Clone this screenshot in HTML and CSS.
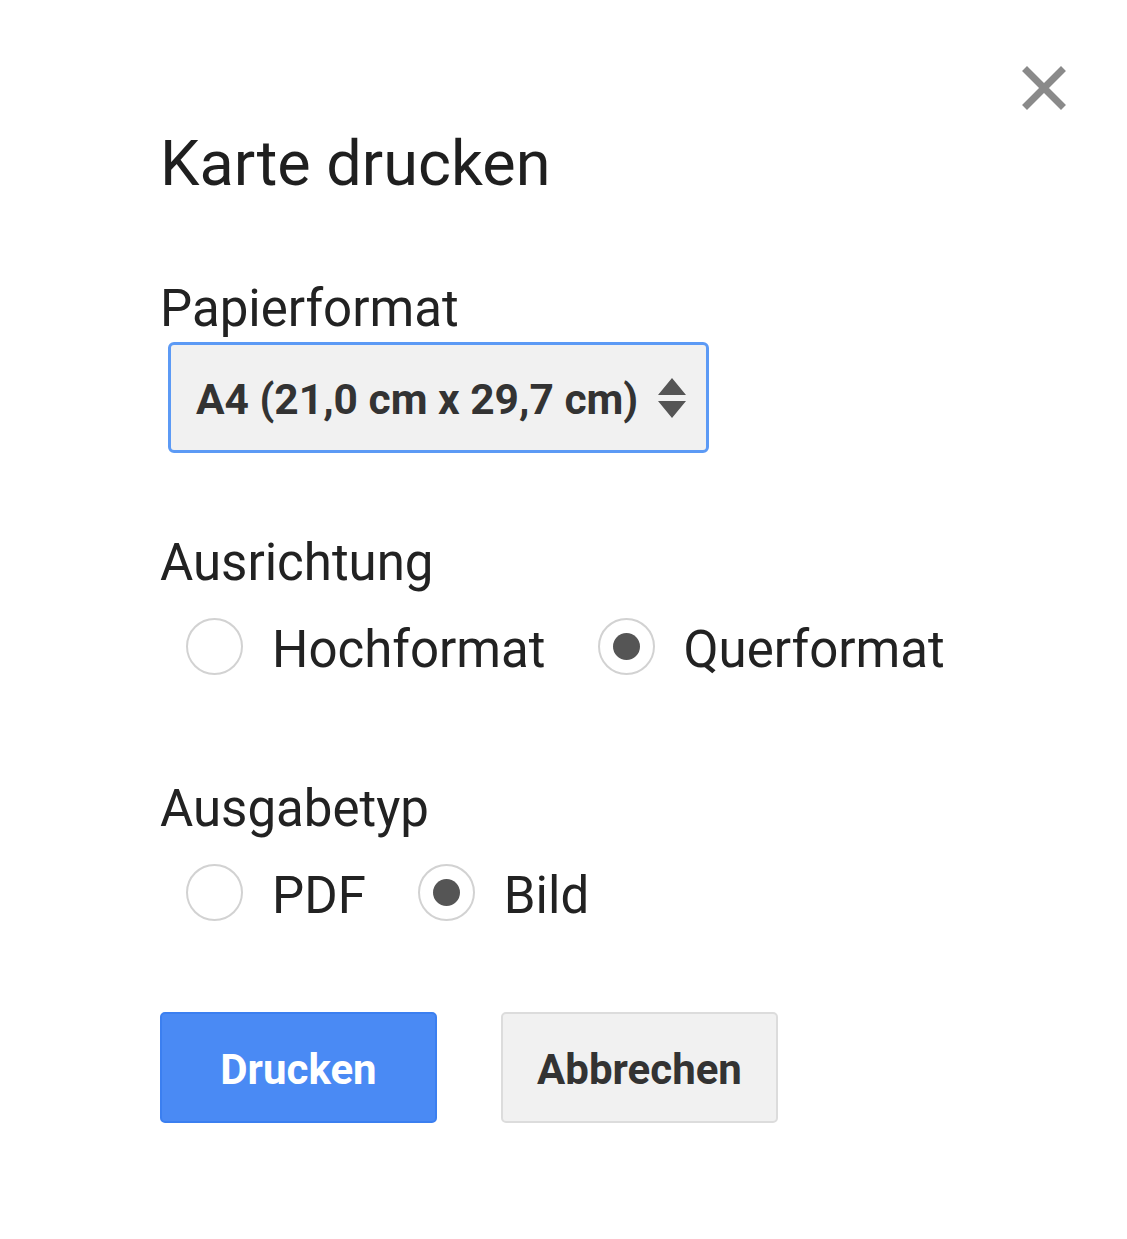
FILE: index.html
```html
<!DOCTYPE html>
<html lang="de">
<head>
    <meta charset="UTF-8">
    <title>Karte drucken</title>
    <link rel="stylesheet" href="styles.css">
</head>
<body>
    <div class="dialog">
        <button class="close" aria-label="Schließen">
            <svg width="44" height="44" viewBox="0 0 44 44">
                <path d="M5 5 L39 39 M39 5 L5 39" stroke="#8a8a8a" stroke-width="7" stroke-linecap="square"/>
            </svg>
        </button>

        <h1 class="title">Karte drucken</h1>

        <div class="label label-first">Papierformat</div>
        <div class="select">
            <span>A4 (21,0 cm x 29,7 cm)</span>
            <svg class="arrows" width="30" height="44" viewBox="0 0 30 44">
                <path d="M15 2 L29 19 L1 19 Z M15 42 L29 25 L1 25 Z" fill="#555"/>
            </svg>
        </div>

        <div class="label">Ausrichtung</div>
        <div class="radios">
            <div class="radio"><span class="dot"></span>Hochformat</div>
            <div class="radio checked"><span class="dot"></span>Querformat</div>
        </div>

        <div class="label label-gap">Ausgabetyp</div>
        <div class="radios">
            <div class="radio"><span class="dot"></span>PDF</div>
            <div class="radio checked"><span class="dot"></span>Bild</div>
        </div>

        <div class="buttons">
            <button class="btn primary">Drucken</button>
            <button class="btn">Abbrechen</button>
        </div>
    </div>
</body>
</html>
```

FILE: styles.css
```css
body {
    margin: 0;
    background: #fff;
    font-family: Roboto, "Liberation Sans", Arial, sans-serif;
    color: #222;
}
.dialog {
    position: relative;
    padding: 124px 0 0 160px;
    width: 967px;
    height: 1115px;
}
.close {
    position: absolute;
    left: 1022px;
    top: 66px;
    width: 44px;
    height: 44px;
    padding: 0;
    border: none;
    background: none;
}
.close svg { display: block; }
.title {
    margin: 0;
    font-size: 63px;
    font-weight: 400;
    line-height: 80px;
    color: #1f1f1f;
}
.label {
    font-size: 51px;
    line-height: 66px;
    margin-top: 77px;
    color: #222;
}
.label-first { margin-top: 72px; }
.label-gap { margin-top: 94px; }
.select {
    box-sizing: border-box;
    display: flex;
    align-items: center;
    justify-content: space-between;
    width: 541px;
    height: 111px;
    margin: 0 0 0 8px;
    padding: 4px 19px 0 25px;
    border: 3px solid #5c9af5;
    border-radius: 6px;
    background: #f1f1f1;
    font-size: 42.5px;
    font-weight: 700;
    white-space: nowrap;
    color: #333;
}
.arrows { display: block; margin-top: -4px; }
.radios {
    display: flex;
    gap: 52px;
    margin: 18px 0 0 26px;
}
.radio {
    display: flex;
    align-items: center;
    gap: 29px;
    height: 66px;
    font-size: 51px;
    color: #222;
    padding-top: 2px;
}
.dot {
    box-sizing: border-box;
    position: relative;
    width: 57px;
    height: 57px;
    margin-top: -6px;
    border: 2px solid #d2d2d2;
    border-radius: 50%;
    background: #fff;
}
.checked .dot::after {
    content: "";
    position: absolute;
    left: 13px;
    top: 13px;
    width: 27px;
    height: 27px;
    border-radius: 50%;
    background: #555;
}
.buttons {
    display: flex;
    gap: 64px;
    margin-top: 84px;
}
.btn {
    box-sizing: border-box;
    width: 277px;
    height: 111px;
    padding: 4px 0 0;
    border: 2px solid #dcdcdc;
    border-radius: 5px;
    background: #f1f1f1;
    font-family: Roboto, "Liberation Sans", Arial, sans-serif;
    font-size: 42px;
    font-weight: 700;
    color: #333;
}
.primary {
    border-color: #3b7ff0;
    background: #4a8af4;
    color: #fff;
}
```
